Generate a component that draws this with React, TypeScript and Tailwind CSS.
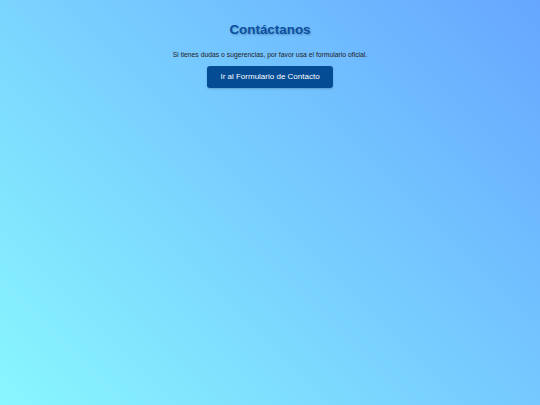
export default function App() {
  return (
    <div
      className="min-h-[405px] w-full bg-[linear-gradient(45deg,#89f7fe,#66a6ff)] flex flex-col items-center pt-[21px]"
      style={{ fontFamily: '"Liberation Sans", Arial, sans-serif' }}
    >
      <h1 className="text-[13.4px] leading-[18px] font-bold text-[#0a4fa0] [text-shadow:1px_1px_2px_rgba(0,0,0,0.25)]">
        Contáctanos
      </h1>
      <p className="mt-[11px] text-[6.8px] leading-[10px] text-[#222]">
        Si tienes dudas o sugerencias, por favor usa el formulario oficial.
      </p>
      <a
        href="#"
        className="mt-[6px] h-[22px] px-[13.5px] flex items-center rounded-[3px] bg-[#044c94] text-white text-[8px] shadow-[0_1px_2px_rgba(0,0,0,0.2)]"
      >
        Ir al Formulario de Contacto
      </a>
    </div>
  );
}
